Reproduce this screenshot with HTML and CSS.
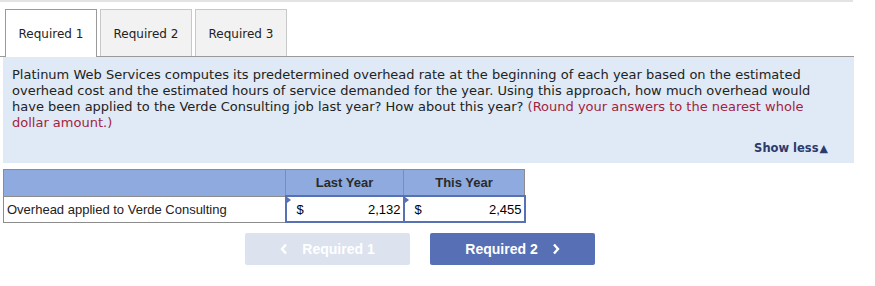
FILE: index.html
```html
<!DOCTYPE html>
<html>
<head>
<meta charset="utf-8">
<link rel="stylesheet" href="styles.css">
</head>
<body>
<div class="topbar"></div>
<div class="tabs">
  <div class="tab active">Required 1</div>
  <div class="tab">Required 2</div>
  <div class="tab">Required 3</div>
</div>
<div class="panel">
  <p class="question">Platinum Web Services computes its predetermined overhead rate at the beginning of each year based on the estimated overhead cost and the estimated hours of service demanded for the year. Using this approach, how much overhead would have been applied to the Verde Consulting job last year? How about this year? <span class="hint">(Round your answers to the nearest whole dollar amount.)</span></p>
  <div class="showless">Show less<span class="tri">&#9650;</span></div>
</div>
<table class="grid">
  <tr class="head">
    <th class="label"></th>
    <th class="col">Last Year</th>
    <th class="col">This Year</th>
  </tr>
  <tr class="row">
    <td class="label">Overhead applied to Verde Consulting</td>
    <td class="input"><span class="flag"></span><span class="cur">$</span><span class="val">2,132</span></td>
    <td class="input"><span class="flag"></span><span class="cur">$</span><span class="val">2,455</span></td>
  </tr>
</table>
<div class="nav">
  <div class="btn prev"><svg class="chev left" width="8" height="12" viewBox="0 0 8 12"><polyline points="6,1.5 2,6 6,10.5" fill="none" stroke="#fff" stroke-width="2.4"/></svg>Required 1</div>
  <div class="btn next">Required 2<svg class="chev right" width="8" height="12" viewBox="0 0 8 12"><polyline points="2,1.5 6,6 2,10.5" fill="none" stroke="#fff" stroke-width="2.4"/></svg></div>
</div>
</body>
</html>
```
FILE: styles.css
```css
body {
  margin: 0;
  font-family: "DejaVu Sans", Verdana, sans-serif;
  background: #fff;
}
.topbar {
  height: 2px;
  width: 853px;
  background: #e3e3e3;
}
.tabs {
  display: flex;
  gap: 3px;
  margin-top: 7px;
  padding-left: 5px;
  box-sizing: border-box;
  width: 854px;
  border-bottom: 1px solid #9a9a9a;
}
.tab {
  width: 92px;
  height: 47px;
  box-sizing: border-box;
  border: 1px solid #c8c8c8;
  border-bottom: none;
  background: #f2f2f2;
  font-size: 12px;
  color: #222;
  display: flex;
  align-items: center;
  justify-content: center;
  padding-top: 1px;
}
.tab.active {
  background: #fff;
  border-color: #9a9a9a;
  margin-bottom: -1px;
  height: 48px;
  padding-bottom: 1px;
}
.panel {
  margin-left: 3px;
  width: 851px;
  height: 106px;
  background: #dfeaf6;
  box-sizing: border-box;
  padding: 10px 9px 0 9px;
  position: relative;
}
.question {
  margin: 0;
  width: 806px;
  font-size: 13px;
  line-height: 16px;
  color: #222;
}
.hint {
  color: #a3233e;
}
.showless {
  position: absolute;
  right: 26px;
  top: 84px;
  font-size: 11.5px;
  font-weight: bold;
  color: #2c3a6c;
}
.tri {
  font-size: 11px;
  margin-left: 1px;
}
.grid {
  margin: 6px 0 0 3px;
  border-collapse: collapse;
  font-family: "Liberation Sans", Arial, sans-serif;
  font-size: 13px;
}
.grid th, .grid td {
  border: 1px solid #8c8c8c;
  padding: 0;
}
.head th {
  background: #8eaade;
  height: 25px;
  color: #2a2a2a;
  font-weight: bold;
  font-size: 13px;
}
.head th.label { width: 281px; }
.head th.col { width: 117px; }
.head th.col:last-child { width: 120px; }
.row td {
  height: 24px;
}
.row td.label {
  padding-left: 3px;
  color: #222;
}
.row td.input {
  border: 2px solid #5870b4;
  position: relative;
  padding: 0 2px 0 10px;
}
.input .cur { float: left; }
.input .val { float: right; }
.flag {
  position: absolute;
  left: 0;
  top: 0;
  width: 0;
  height: 0;
  border-top: 3px solid transparent;
  border-bottom: 3px solid transparent;
  border-left: 4px solid #5870b4;
}
.nav {
  display: flex;
  gap: 20px;
  margin: 10px 0 0 245px;
}
.btn {
  width: 165px;
  height: 32px;
  border-radius: 2px;
  font-family: "Liberation Sans", Arial, sans-serif;
  font-weight: bold;
  font-size: 14px;
  color: #fff;
  display: flex;
  align-items: center;
  justify-content: center;
}
.prev { background: #dce3ef; }
.next { background: #566fb5; }
.chev.left { margin-right: 14px; }
.chev.right { margin-left: 14px; }
```
